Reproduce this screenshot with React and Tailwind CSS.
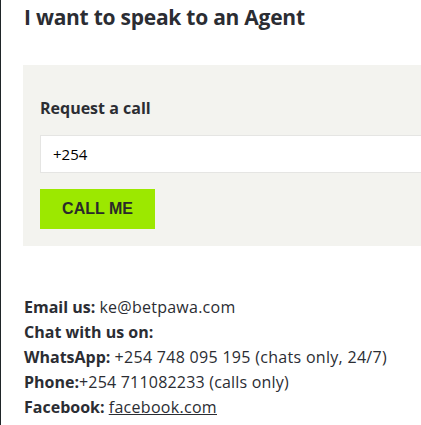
export default function App() {
  return (
    <div className="w-[421px] h-[425px] overflow-hidden bg-white border-l border-[#1f2528] text-[#2b2d33]" style={{ fontFamily: "'Open Sans', sans-serif" }}>
      <div className="pl-[22px]">
        <h1 className="text-[21px] leading-[34px] font-bold pl-[1px] tracking-[-0.25px]">I want to speak to an Agent</h1>
        <div className="mt-[31px] bg-[#f3f3ef] h-[181px] pl-[17px] pt-[33px]">
          <div className="text-[16px] font-bold leading-[20px]">Request a call</div>
          <div className="mt-[17px] h-[38px] bg-white border border-[#e5e5e3] border-r-0 flex items-center pl-[12px] text-[15px] text-black">+254</div>
          <button className="mt-[16px] w-[115px] h-[40px] bg-[#9ce800] text-[16px] font-bold text-[#2a2a2a] flex items-center justify-center" style={{ fontFamily: "'Liberation Sans', Arial, sans-serif" }}>CALL ME</button>
        </div>
        <div className="mt-[49px] text-[16px] leading-[25px] pl-[1px]">
          <div><span className="font-bold">Email us:</span> <span className="tracking-[0.25px]">ke@betpawa.com</span></div>
          <div className="font-bold">Chat with us on:</div>
          <div><span className="font-bold">WhatsApp:</span> <span className="tracking-[0.3px]">+254 748 095 195 (chats only, 24/7)</span></div>
          <div><span className="font-bold">Phone:</span><span className="tracking-[0.2px]">+254 711082233 (calls only)</span></div>
          <div><span className="font-bold">Facebook:</span> <span className="underline tracking-[0.3px]">facebook.com</span></div>
        </div>
      </div>
    </div>
  );
}
